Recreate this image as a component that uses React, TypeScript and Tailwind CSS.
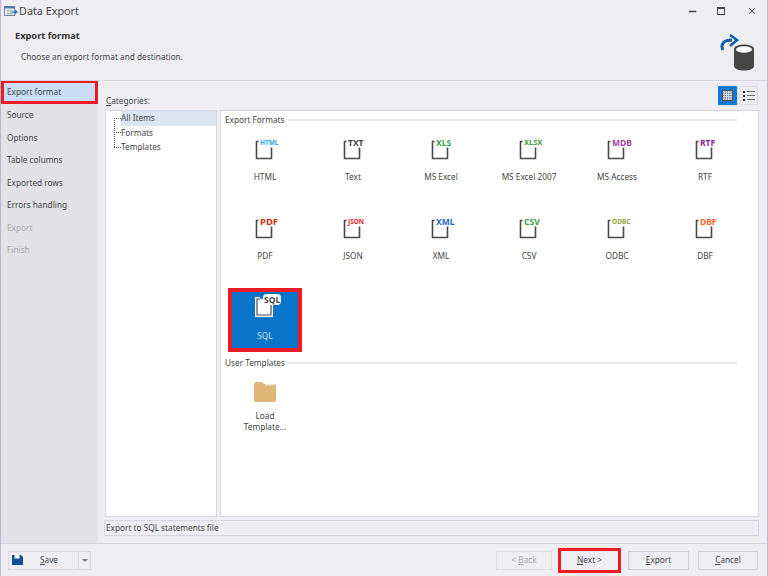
import { Minus, X } from 'lucide-react'

const font = { fontFamily: '"Noto Sans", sans-serif' }

const steps = ['Source', 'Options', 'Table columns', 'Exported rows', 'Errors handling']

const formats = [
  { name: 'HTML', badge: 'HTML', color: 'text-[#29a8e0]', size: 'text-[6.5px]' },
  { name: 'Text', badge: 'TXT', color: 'text-[#444444]', size: 'text-[8.5px]' },
  { name: 'MS Excel', badge: 'XLS', color: 'text-[#3f9c45]', size: 'text-[8.5px]' },
  { name: 'MS Excel 2007', badge: 'XLSX', color: 'text-[#3f9c45]', size: 'text-[7.5px]' },
  { name: 'MS Access', badge: 'MDB', color: 'text-[#a13fa0]', size: 'text-[8.5px]' },
  { name: 'RTF', badge: 'RTF', color: 'text-[#7b2a8f]', size: 'text-[8.5px]' },
  { name: 'PDF', badge: 'PDF', color: 'text-[#c8321f]', size: 'text-[9.5px]' },
  { name: 'JSON', badge: 'JSON', color: 'text-[#e8262a]', size: 'text-[6.5px]' },
  { name: 'XML', badge: 'XML', color: 'text-[#1e66b4]', size: 'text-[8.5px]' },
  { name: 'CSV', badge: 'CSV', color: 'text-[#3f9c45]', size: 'text-[8.5px]' },
  { name: 'ODBC', badge: 'ODBC', color: 'text-[#8fa348]', size: 'text-[6.5px]' },
  { name: 'DBF', badge: 'DBF', color: 'text-[#f2672e]', size: 'text-[8.5px]' },
]

function FileIcon({ badge, color, size, selected }: { badge: string; color: string; size: string; selected?: boolean }) {
  return (
    <div className="relative w-[32px] h-[24px]">
      <svg width="18" height="21" viewBox="0 0 18 21" className="absolute left-[6px] top-[3px]">
        <path
          d={selected ? 'M5 1.500H1.500V18.500H16.500V5.500' : 'M3.500 1.500H1.500V18.500H16.500V7.500'}
          fill={selected ? '#ffffff' : 'none'}
          stroke={selected ? '#ffffff' : '#4a4a4a'}
          strokeWidth={selected ? 3 : 1.6}
        />
        {selected && <path d="M5 2H2V18H16V6" fill="#ffffff" stroke="#4a4a4a" strokeWidth="1.2" />}
      </svg>
      <span
        className={`absolute font-bold leading-[11px] whitespace-nowrap ${size} ${color} ${
          selected ? 'left-[14px] top-0 bg-white rounded-sm px-[1px]' : 'left-[11px] top-0'
        }`}
      >
        {badge}
      </span>
    </div>
  )
}

function GroupTitle({ title }: { title: string }) {
  return (
    <div className="flex items-center gap-[3px] h-[12px] pr-[21px]">
      <span className="text-[8.25px] leading-[12px] text-[#444444]">{title}</span>
      <div className="flex-1 h-[2px] bg-[#e8e8ee]" />
    </div>
  )
}

function FormatCell({ name, badge, color, size }: { name: string; badge: string; color: string; size: string }) {
  return (
    <div className="w-[88px] h-[79px] flex flex-col items-center pt-[7px]">
      <FileIcon badge={badge} color={color} size={size} />
      <span className="mt-[10px] text-[8.25px] leading-[12px] text-[#444444] whitespace-nowrap">{name}</span>
    </div>
  )
}

function FooterButton({ label, hot, disabled, className }: { label: string; hot: string; disabled?: boolean; className: string }) {
  const at = label.indexOf(hot)
  return (
    <button
      className={`h-[19px] border text-center text-[8.25px] ${
        disabled ? 'border-[#dddde2] text-[#aaaaaa]' : 'border-[#d0d0da] text-[#444444]'
      } ${className}`}
    >
      <span className="whitespace-pre">
        {label.slice(0, at)}
        <span className="underline">{hot}</span>
        {label.slice(at + 1)}
      </span>
    </button>
  )
}

export default function App() {
  return (
    <div style={font} className="w-[768px] h-[576px] flex flex-col bg-[#eeeef2] border-l border-r border-[#b8b8d0] overflow-hidden">
      <div className="h-[22px] shrink-0 flex items-center pl-[3px]">
        <svg width="14" height="11" viewBox="0 0 14 11">
          <rect x="0.5" y="0.5" width="10" height="9" fill="#ffffff" stroke="#6f7f9f" />
          <rect x="0.5" y="0.5" width="10" height="2" fill="#4c78b0" />
          <path d="M2 5h7M2 7.500h7M4 3v6M7 3v6" stroke="#8b9ab5" strokeWidth="0.8" />
          <path d="M8 5.500h3V3.800L14 6l-3 2.200V6.800H8z" fill="#1e72c0" />
        </svg>
        <span className="ml-[1px] text-[10.8px] text-[#444444]">Data Export</span>
        <div className="ml-auto flex items-center text-[#444444]">
          <Minus size={11} strokeWidth={3} className="mr-[19px]" />
          <div className="w-[8px] h-[8px] border border-[#444444] border-t-2 mr-[22px]" />
          <X size={10} strokeWidth={2.500} className="mr-[10px]" />
        </div>
      </div>

      <div className="h-[59px] shrink-0 border-b border-[#d6d6e0] relative pl-[14px] pt-[8px]">
        <div className="text-[9.25px] leading-[12px] font-bold text-[#333333]">Export format</div>
        <div className="mt-[9px] ml-[6px] text-[8.25px] leading-[12px] text-[#444444]">Choose an export format and destination.</div>
        <svg width="36" height="37" viewBox="0 0 36 37" className="absolute right-[12px] top-[12px]">
          <path d="M4 16C1 10 5 6 13 6" fill="none" stroke="#0f5fa8" strokeWidth="3" />
          <path d="M11 1l7 5-7 6" fill="none" stroke="#0f5fa8" strokeWidth="2.600" />
          <path d="M15 15c0-6 20-6 20 0v17c0 6-20 6-20 0z" fill="#474747" />
          <ellipse cx="25" cy="15.500" rx="8" ry="3.200" fill="#ffffff" />
        </svg>
      </div>

      <div className="flex-1 min-h-0 flex">
        <div className="w-[97px] shrink-0 bg-[#e1e1e6] flex flex-col text-[8.25px] text-[#444444]">
          <div className="h-[24px] -mt-[1px] shrink-0 border-[3px] border-[#ed1c24] bg-[#c9def5] flex items-center pl-[3px]">Export format</div>
          {steps.map((s) => (
            <div key={s} className="h-[22.5px] flex items-center pl-[6px]">{s}</div>
          ))}
          <div className="h-[22.5px] flex items-center pl-[6px] text-[#a8a8a8]">Export</div>
          <div className="h-[22.5px] flex items-center pl-[6px] text-[#a8a8a8]">Finish</div>
        </div>

        <div className="flex-1 min-w-0 flex flex-col pl-[7px] pr-[8px]">
          <div className="h-[29px] shrink-0 flex items-end justify-between pb-[3px] pl-[1px]">
            <span className="text-[8.25px] leading-[12px] text-[#444444]"><span className="underline">C</span>ategories:</span>
            <div className="flex items-center gap-[3px] mb-[2px] mr-[1px]">
              <div className="w-[19px] h-[19px] bg-[#0f78d4] flex items-center justify-center">
                <svg width="11" height="11" viewBox="0 0 11 11">
                  <rect x="0.500" y="0.500" width="10" height="10" fill="#d5dde6" stroke="#555555" />
                  <path d="M3 1v9M5.500 1v9M8 1v9M1 3h9M1 5.500h9M1 8h9" stroke="#666666" strokeWidth="0.8" strokeDasharray="1 1" />
                </svg>
              </div>
              <div className="w-[18px] h-[19px] border border-[#dcdce4] flex flex-col justify-center gap-[2px] pl-[2px]">
                {[0, 1, 2].map((i) => (
                  <div key={i} className="flex items-center gap-[2px]">
                    <div className="w-[2px] h-[2px] bg-[#333333]" />
                    <div className="w-[8px] h-[1px] bg-[#666666]" />
                  </div>
                ))}
              </div>
            </div>
          </div>

          <div className="flex-1 min-h-0 flex gap-[3px]">
            <div className="w-[112px] shrink-0 bg-white border border-[#d6d6e0] relative text-[8.25px] text-[#444444]">
              <div className="absolute left-[8px] top-[7px] h-[29px] border-l border-dotted border-[#555555]" />
              {['All Items', 'Formats', 'Templates'].map((t, i) => (
                <div key={t} className="h-[14.5px] flex items-center">
                  <div className="ml-[8px] w-[7px] border-t border-dotted border-[#555555]" />
                  <div className={`flex-1 h-full flex items-center ${i === 0 ? 'bg-[#dce6f2]' : ''}`}>{t}</div>
                </div>
              ))}
            </div>

            <div className="flex-1 min-w-0 bg-white border border-[#d6d6e0] pl-[4px] pt-[3px]">
              <GroupTitle title="Export Formats" />
              <div className="flex flex-wrap -ml-[4px] mt-[4px]">
                {formats.map((f) => (
                  <FormatCell key={f.name} {...f} />
                ))}
              </div>
              <div className="w-[88px] h-[64px] -ml-[4px] flex justify-center">
                <div className="w-[74px] h-[64px] border-[4px] border-[#ed1c24] bg-[#0a74c9] flex flex-col items-center pt-[2px]">
                  <FileIcon badge="SQL" color="text-[#444444]" size="text-[8.5px]" selected />
                  <span className="mt-[12px] text-[8.25px] leading-[12px] text-[#cfe6fa]">SQL</span>
                </div>
              </div>
              <div className="mt-[5px]">
                <GroupTitle title="User Templates" />
              </div>
              <div className="w-[88px] -ml-[4px] flex flex-col items-center pt-[12px]">
                <svg width="24" height="22" viewBox="0 0 24 22">
                  <path d="M1 3.500C1 2 2 1 3 1h6l2 2h10c1.500 0 2 1 2 2v14c0 1.500-1 2-2 2H3c-1 0-2-.5-2-2z" fill="#dfb877" />
                  <path d="M12 3h9v1.500h-9z" fill="#f4e6cc" />
                </svg>
                <span className="mt-[7px] text-[8.25px] leading-[11px] text-[#444444] text-center">Load<br />Template...</span>
              </div>
            </div>
          </div>

          <div className="h-[16px] shrink-0 mt-[3px] mb-[7px] -ml-[1px] border border-[#d6d6e0] flex items-center pl-[1px] text-[8.25px] text-[#444444]">
            Export to SQL statements file
          </div>
        </div>
      </div>

      <div className="h-[33px] shrink-0 border-t border-[#d6d6e0] flex items-center pl-[7px] pr-[9px]">
        <div className="w-[83px] h-[19px] border border-[#d8d8e2] flex items-center text-[8.25px] text-[#444444]">
          <svg width="11" height="10" viewBox="0 0 11 10" className="ml-[3px]">
            <path d="M0 0h9l2 2v8H0z" fill="#0f4f96" />
            <path d="M2.500 0h5v3.500h-5z" fill="#ffffff" />
          </svg>
          <span className="ml-[17px] w-[38px]"><span className="underline">S</span>ave</span>
          <div className="h-full border-l border-[#d8d8e2] flex-1 flex items-center justify-center">
            <div className="w-0 h-0 border-x-[3px] border-x-transparent border-t-[3px] border-t-[#777777]" />
          </div>
        </div>
        <FooterButton label="< Back" hot="B" disabled className="ml-auto w-[56px]" />
        <FooterButton label="Next >" hot="N" className="ml-[6px] w-[63px] h-[25px] border-[3px] border-[#ed1c24]" />
        <FooterButton label="Export" hot="E" className="ml-[7px] w-[61px]" />
        <FooterButton label="Cancel" hot="C" className="ml-[9px] w-[60px]" />
      </div>
    </div>
  )
}
